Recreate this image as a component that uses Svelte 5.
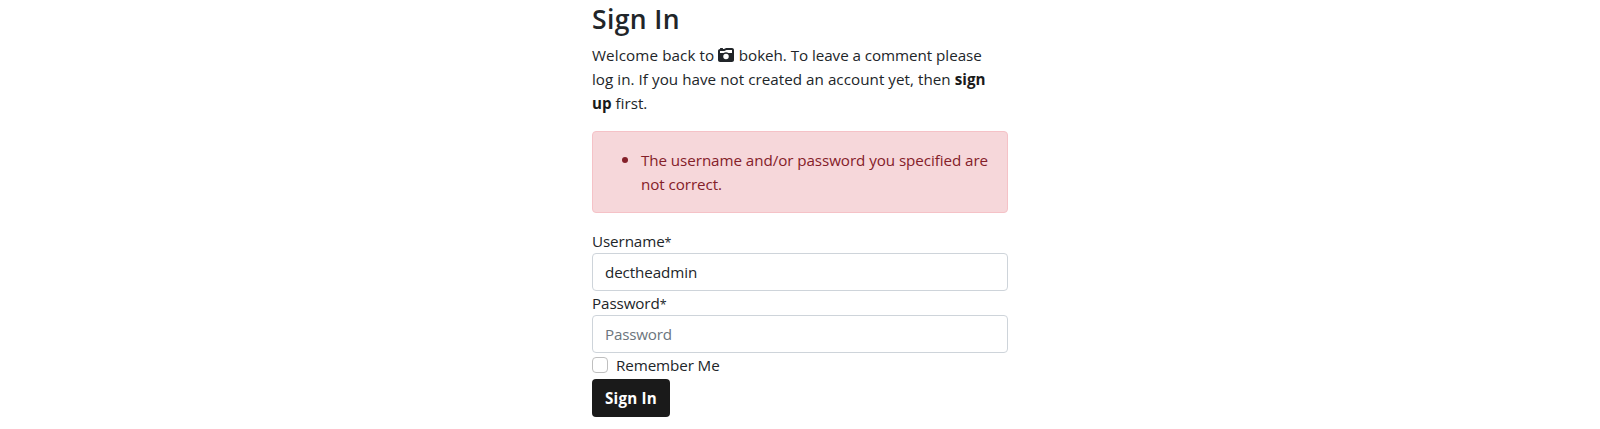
<script>
  let username = $state('dectheadmin');
  let password = $state('');
  let remember = $state(false);
</script>

<main>
  <h3>Sign In</h3>
  <p>
    <span class="line"><span class="intro">Welcome back to <svg viewBox="0 0 512 512" aria-hidden="true"><path fill="currentColor" d="M220.600 121.200L271.100 96 448 96v96H333.200c-21.900-15.100-48.500-24-77.200-24s-55.200 8.900-77.200 24H64V128H192c9.900 0 19.700-2.300 28.600-6.800zM0 128V416c0 35.300 28.700 64 64 64H448c35.300 0 64-28.700 64-64V96c0-35.300-28.700-64-64-64H271.100c-9.900 0-19.700 2.300-28.600 6.800L192 64H160V48c0-8.800-7.200-16-16-16H80c-8.800 0-16 7.200-16 16V64C28.700 64 0 92.700 0 128zM344 304a88 88 0 1 1-176 0 88 88 0 1 1 176 0z" /></svg></span>{' '}<span class="rest">bokeh. To leave a comment please</span></span>
    <span class="line wide">log in. If you have not created an account yet, then <b>sign</b></span>
    <span class="line"><b>up</b> first.</span>
  </p>

  <div class="alert" role="alert">
    <ul>
      <li>
        <span class="line">The username and/or password you specified are</span>
        <span class="line">not correct.</span>
      </li>
    </ul>
  </div>

  <form onsubmit={(e) => e.preventDefault()}>
    <label for="login">Username<span class="required">*</span></label>
    <input id="login" class="control" type="text" bind:value={username} />
    <label for="password">Password<span class="required">*</span></label>
    <input id="password" class="control" type="password" placeholder="Password" bind:value={password} />
    <div class="check">
      <input id="remember" type="checkbox" bind:checked={remember} />
      <label for="remember">Remember Me</label>
    </div>
    <button type="submit">Sign In</button>
  </form>
</main>

<style>
  :global(body) {
    margin: 0;
    background: #fff;
    overflow: hidden;
  }
  main {
    box-sizing: border-box;
    width: 416px;
    margin: 0 auto;
    padding-top: 2px;
    color: #212529;
    font: 400 15.2px/24px 'Open Sans', 'Noto Sans', sans-serif;
  }
  h3 {
    margin: 0 0 7px;
    font-size: 26.5px;
    font-weight: 600;
    line-height: 34px;
    letter-spacing: 0.4px;
  }
  p {
    margin: 0 0 16px;
  }
  .line {
    display: block;
    white-space: nowrap;
  }
  .intro {
    letter-spacing: 0.1px;
  }
  .rest {
    letter-spacing: -0.05px;
  }
  .wide {
    letter-spacing: 0.04px;
  }
  b {
    color: #1a1a1a;
    font-weight: 700;
  }
  svg {
    width: 16px;
    height: 16px;
    margin-right: 0.5px;
    vertical-align: -2px;
  }
  .alert {
    margin-bottom: 16px;
    padding: 16px;
    border: 1px solid #f5c2c7;
    border-radius: 4px;
    background: #f6d7da;
    color: #842029;
    letter-spacing: -0.07px;
  }
  ul {
    margin: 0;
    padding-left: 32px;
  }
  li::marker {
    font-size: 18px;
    line-height: 0;
  }
  form {
    display: flex;
    flex-direction: column;
    align-items: flex-start;
  }
  label {
    letter-spacing: -0.1px;
  }
  .required {
    font-size: 12.5px;
    line-height: 1;
  }
  .control {
    box-sizing: border-box;
    width: 100%;
    height: 38px;
    margin: 0;
    padding: 6px 12px;
    border: 1px solid #ced4da;
    border-radius: 4px;
    outline: 0;
    background: #fff;
    color: #212529;
    font: inherit;
    letter-spacing: -0.1px;
  }
  .control::placeholder {
    color: #6c757d;
    opacity: 1;
    letter-spacing: -0.2px;
  }
  .check {
    display: flex;
    align-items: flex-start;
    gap: 8px;
    margin-bottom: 2px;
  }
  .check input {
    box-sizing: border-box;
    width: 16px;
    height: 16px;
    margin: 4px 0 0;
    appearance: none;
    border: 1px solid #bfbfbf;
    border-radius: 4px;
    background: #fff;
  }
  .check input:checked {
    background: #1a1a1a;
  }
  button {
    box-sizing: border-box;
    width: 78px;
    height: 38px;
    padding: 0;
    border: 0;
    border-radius: 4px;
    background: #1a1a1a;
    color: #fff;
    font: inherit;
    font-weight: 700;
    letter-spacing: 0.2px;
  }
</style>
